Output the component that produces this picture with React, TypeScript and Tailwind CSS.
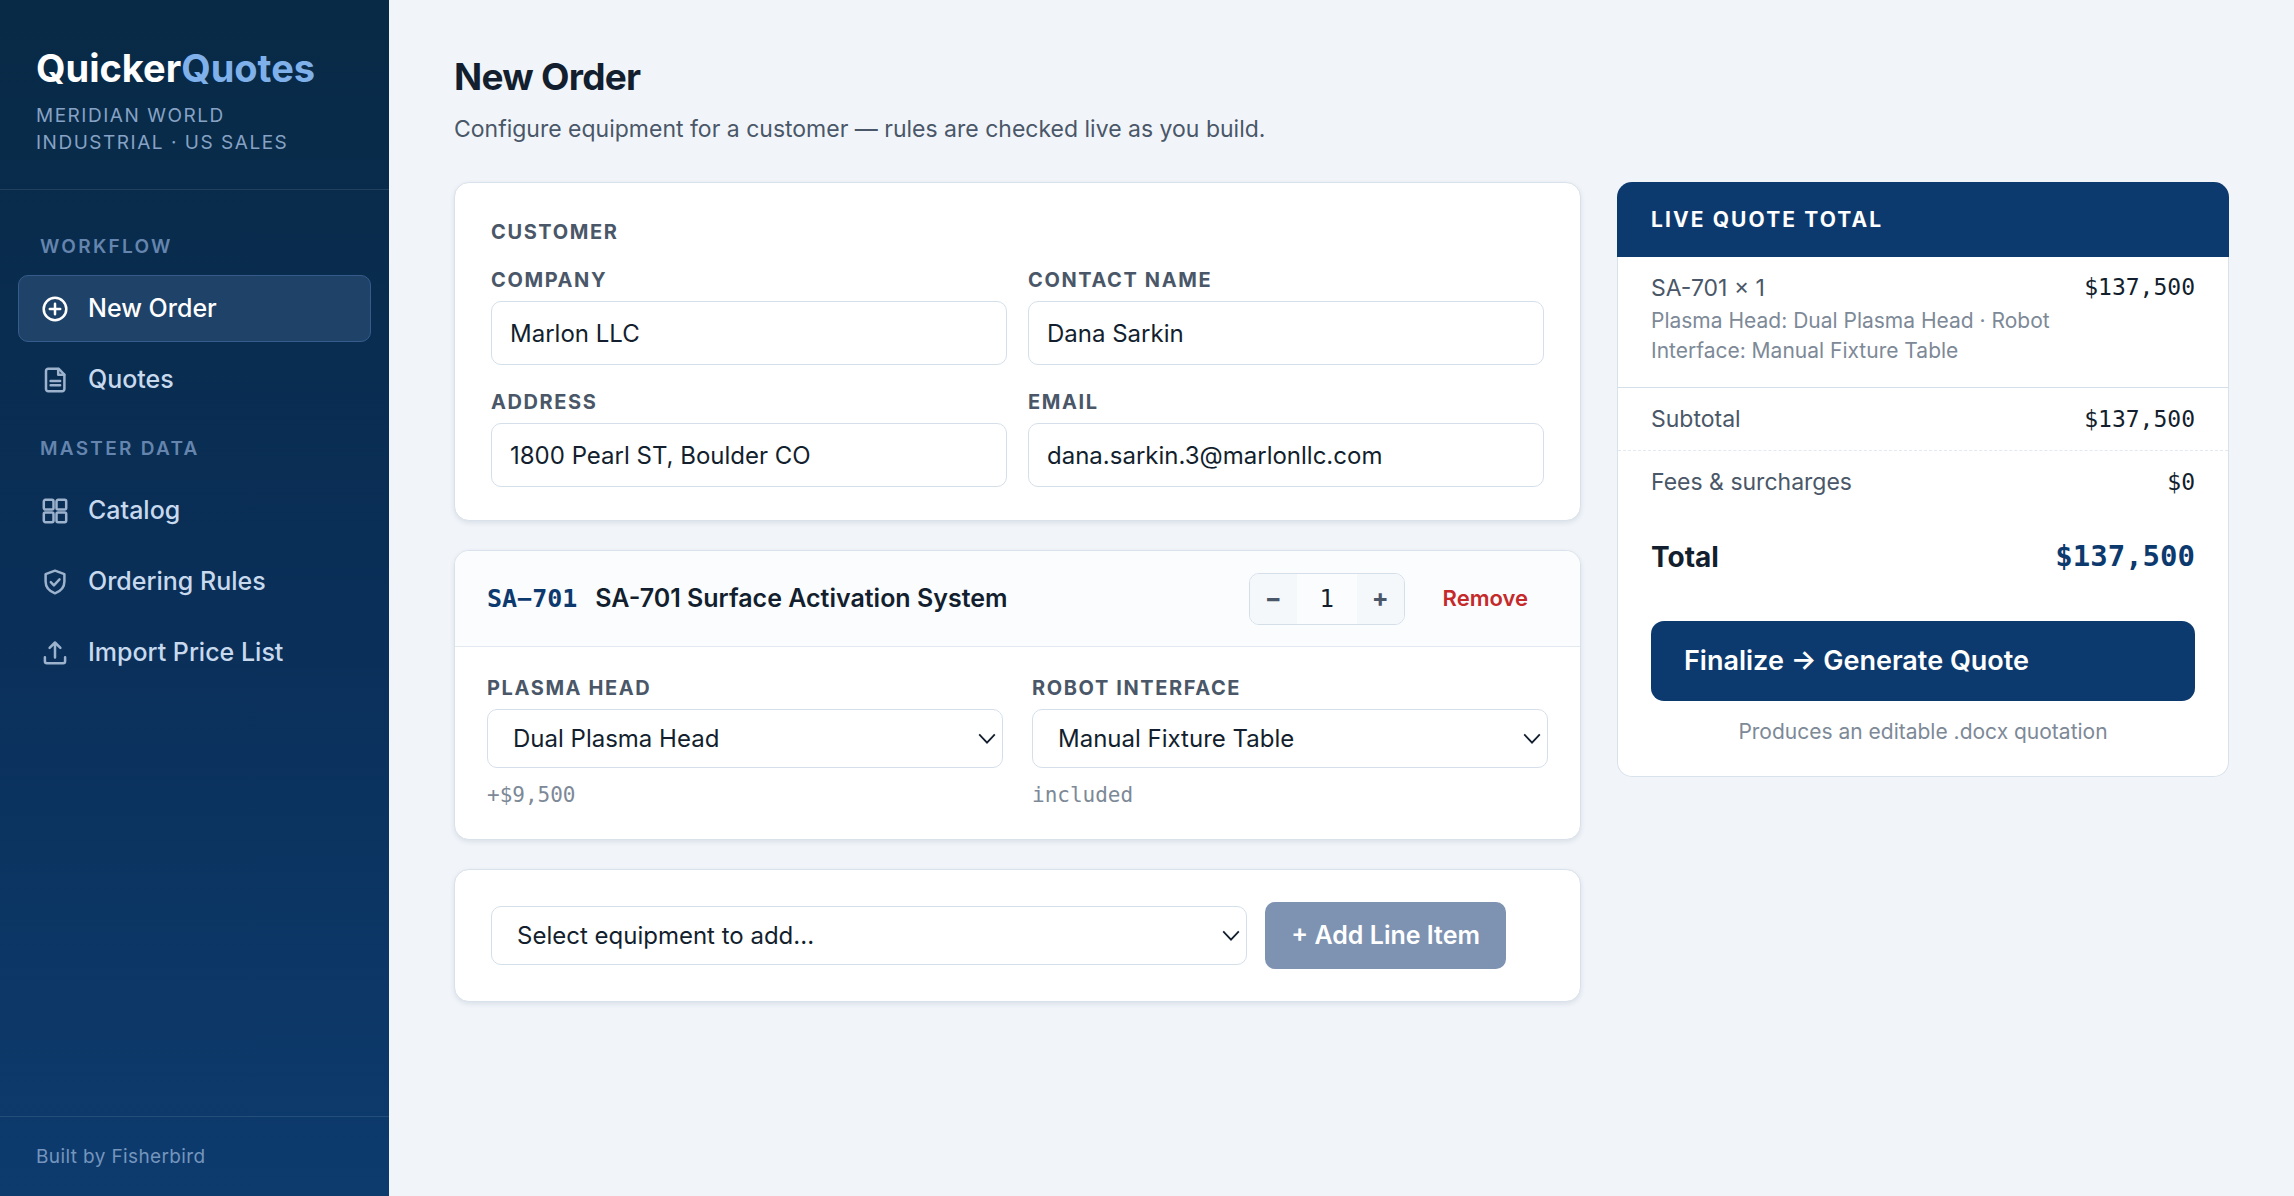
import { useState } from 'react';
import type { ReactNode } from 'react';

const LABEL = 'block text-[20px] leading-[26px] font-bold uppercase tracking-[0.08em] text-[#4a5768]';
const NAV_HEADING = 'mb-[11px] px-[22px] text-[19px] leading-[26px] font-semibold uppercase tracking-[0.12em] text-[#6585ae]';
const CARD = 'rounded-[15px] border border-[#d9e1eb] bg-white shadow-[0_2px_5px_rgba(16,42,67,0.10)]';

function Icon({ children }: { children: ReactNode }) {
  return (
    <svg
      viewBox="0 0 30 30"
      className="size-[30px] shrink-0"
      fill="none"
      stroke="currentColor"
      strokeWidth="2.5"
      strokeLinecap="round"
      strokeLinejoin="round"
      aria-hidden="true"
    >
      {children}
    </svg>
  );
}

const workflowItems = [
  {
    label: 'New Order',
    active: true,
    icon: (
      <Icon>
        <circle cx="15" cy="15" r="11.3" />
        <path d="M15 9.8v10.4M9.8 15h10.4" />
      </Icon>
    ),
  },
  {
    label: 'Quotes',
    active: false,
    icon: (
      <Icon>
        <path d="M18.5 3.7H8.2a2.2 2.2 0 0 0-2.2 2.2v18.2a2.2 2.2 0 0 0 2.2 2.2h14a2.2 2.2 0 0 0 2.2-2.2V9.6z" />
        <path d="M18.2 4v5.8h6M10.6 15.9h9.5M10.6 20.3h9.5" />
      </Icon>
    ),
  },
];

const masterDataItems = [
  {
    label: 'Catalog',
    active: false,
    icon: (
      <Icon>
        <rect x="3.8" y="3.8" width="9.7" height="9.7" rx="1.6" />
        <rect x="16.5" y="3.8" width="9.7" height="9.7" rx="1.6" />
        <rect x="3.8" y="16.5" width="9.7" height="9.7" rx="1.6" />
        <rect x="16.5" y="16.5" width="9.7" height="9.7" rx="1.6" />
      </Icon>
    ),
  },
  {
    label: 'Ordering Rules',
    active: false,
    icon: (
      <Icon>
        <path d="M15 3.7l9.4 3.5v7.3c0 5.5-3.9 9.8-9.4 11.8-5.5-2-9.4-6.3-9.4-11.8V7.2z" />
        <path d="M10.8 15.2l3.1 3.1 5.6-5.9" />
      </Icon>
    ),
  },
  {
    label: 'Import Price List',
    active: false,
    icon: (
      <Icon>
        <path d="M15 19.5v-15M9.6 9.9L15 4.5l5.4 5.4" />
        <path d="M4.9 19.2v4.1a2 2 0 0 0 2 2h16.2a2 2 0 0 0 2-2v-4.1" />
      </Icon>
    ),
  },
];

type NavItemProps = {
  label: string;
  active: boolean;
  icon: ReactNode;
};

function NavItem({ label, active, icon }: NavItemProps) {
  return (
    <a
      href="#"
      aria-current={active ? 'page' : undefined}
      className={`flex h-[67px] items-center gap-[18px] rounded-[10px] border px-[21px] text-[25px] font-medium ${
        active
          ? 'border-[#355c8c] bg-[#1e4268] text-white'
          : 'border-transparent text-[#c8d9ee] hover:bg-white/5'
      }`}
    >
      <span className={active ? 'text-white' : 'text-[#9db3cd]'}>{icon}</span>
      {label}
    </a>
  );
}

function Sidebar() {
  return (
    <aside className="flex w-[389px] shrink-0 flex-col bg-linear-to-b from-[#082a46] via-[#0a2f58] to-[#0d3b6e]">
      <div className="border-b border-white/10 px-9 pt-[46px] pb-[33px]">
        <div className="text-[38px] leading-[44px] font-bold text-white">
          Quicker<span className="text-[#7fb0ea]">Quotes</span>
        </div>
        <p className="mt-3 text-[19px] leading-[27px] uppercase tracking-[0.08em] text-[#87a2c4]">
          Meridian World
          <br />
          Industrial · US Sales
        </p>
      </div>

      <nav className="flex flex-1 flex-col gap-1 px-[18px] pt-11">
        <h2 className={NAV_HEADING}>Workflow</h2>
        {workflowItems.map((item) => (
          <NavItem key={item.label} {...item} />
        ))}
        <h2 className={`mt-[19px] ${NAV_HEADING}`}>Master Data</h2>
        {masterDataItems.map((item) => (
          <NavItem key={item.label} {...item} />
        ))}
      </nav>

      <footer className="border-t border-white/10 px-9 py-[26px] text-[19px] leading-[27px] tracking-[0.02em] text-[#7595bd]">
        Built by Fisherbird
      </footer>
    </aside>
  );
}

type TextFieldProps = {
  id: string;
  label: string;
  type?: string;
  value: string;
};

function TextField({ id, label, type = 'text', value }: TextFieldProps) {
  return (
    <div>
      <label htmlFor={id} className={LABEL}>
        {label}
      </label>
      <input
        id={id}
        type={type}
        defaultValue={value}
        className="mt-2 block h-16 w-full rounded-[10px] border border-[#d5dfea] bg-white px-[18px] text-[24px] text-[#131f2e] outline-none focus:border-[#0d3a6e]"
      />
    </div>
  );
}

type SelectBoxProps = {
  id: string;
  options: string[];
  ariaLabel?: string;
};

function SelectBox({ id, options, ariaLabel }: SelectBoxProps) {
  return (
    <div className="relative">
      <select
        id={id}
        aria-label={ariaLabel}
        className="block h-[59px] w-full appearance-none rounded-[10px] border border-[#d5dfea] bg-white pr-10 pl-[25px] text-[24px] text-[#131f2e] outline-none focus:border-[#0d3a6e]"
      >
        {options.map((option) => (
          <option key={option}>{option}</option>
        ))}
      </select>
      <svg
        viewBox="0 0 18 12"
        className="pointer-events-none absolute top-6 right-[7px] h-3 w-[18px]"
        fill="none"
        stroke="#131f2e"
        strokeWidth="1.8"
        aria-hidden="true"
      >
        <path d="M1.2 1.4L9 9.6l7.8-8.2" />
      </svg>
    </div>
  );
}

function CustomerCard() {
  return (
    <section className={`${CARD} px-9 pt-9 pb-[33px]`}>
      <h2 className={LABEL}>Customer</h2>
      <div className="mt-[22px] grid grid-cols-2 gap-x-[21px] gap-y-6">
        <TextField id="company" label="Company" value="Marlon LLC" />
        <TextField id="contact" label="Contact Name" value="Dana Sarkin" />
        <TextField id="address" label="Address" value="1800 Pearl ST, Boulder CO" />
        <TextField id="email" label="Email" type="email" value="dana.sarkin.3@marlonllc.com" />
      </div>
    </section>
  );
}

type OptionFieldProps = {
  id: string;
  label: string;
  options: string[];
  note: string;
};

function OptionField({ id, label, options, note }: OptionFieldProps) {
  return (
    <div>
      <label htmlFor={id} className={`mb-2 ${LABEL}`}>
        {label}
      </label>
      <SelectBox id={id} options={options} />
      <p className="mt-3 font-['DejaVu_Sans_Mono',monospace] text-[21px] leading-[30px] text-[#7d8997]">{note}</p>
    </div>
  );
}

function LineItemCard() {
  const [qty, setQty] = useState(1);

  return (
    <section className={`${CARD} overflow-hidden`}>
      <header className="flex h-24 items-center border-b border-[#e2e9f1] bg-[#fafcfe] px-8">
        <span className="font-['DejaVu_Sans_Mono',monospace] text-[25px] font-bold text-[#0d3a6e]">SA−701</span>
        <h2 className="ml-[18px] flex-1 text-[25px] font-semibold text-[#131f2e]">SA-701 Surface Activation System</h2>

        {/* Quantity */}
        <div className="flex h-[52px] overflow-hidden rounded-[10px] border border-[#d5dfea]">
          <button
            type="button"
            aria-label="Decrease quantity"
            onClick={() => setQty(Math.max(1, qty - 1))}
            className="w-[47px] bg-[#f4f8fb] text-[25px] font-bold text-[#4a5768]"
          >
            −
          </button>
          <input
            type="text"
            aria-label="Quantity"
            value={qty}
            readOnly
            className="w-[60px] bg-transparent text-center font-['DejaVu_Sans_Mono',monospace] text-[24px] text-[#131f2e] outline-none"
          />
          <button
            type="button"
            aria-label="Increase quantity"
            onClick={() => setQty(qty + 1)}
            className="w-[47px] bg-[#f4f8fb] text-[25px] font-bold text-[#4a5768]"
          >
            +
          </button>
        </div>
        <button type="button" className="ml-[18px] px-5 text-[22px] font-semibold text-[#c52a2a]">
          Remove
        </button>
      </header>

      <div className="grid grid-cols-2 gap-x-[29px] px-8 pt-7 pb-[29px]">
        <OptionField
          id="plasma-head"
          label="Plasma Head"
          options={['Dual Plasma Head', 'Single Plasma Head']}
          note="+$9,500"
        />
        <OptionField
          id="robot-interface"
          label="Robot Interface"
          options={['Manual Fixture Table', 'Robot Arm']}
          note="included"
        />
      </div>
    </section>
  );
}

function AddItemCard() {
  return (
    <section className={`${CARD} flex items-center gap-[18px] py-8 pr-[74px] pl-9`}>
      <div className="flex-1">
        <SelectBox id="equipment" ariaLabel="Equipment" options={['Select equipment to add...', 'SA-701']} />
      </div>
      <button
        type="button"
        className="h-[67px] rounded-[10px] bg-[#7e92b1] px-[26px] text-[25px] font-semibold whitespace-nowrap text-white"
      >
        + Add Line Item
      </button>
    </section>
  );
}

function QuoteSummary() {
  const amount = "font-['DejaVu_Sans_Mono',monospace] text-[23px] text-[#131f2e]";

  return (
    <aside>
      <h2 className="rounded-t-[15px] bg-[#0d3a6e] px-[34px] py-6 text-[21px] leading-[27px] font-bold uppercase tracking-[0.1em] text-white">
        Live Quote Total
      </h2>

      <div className="rounded-b-[15px] border border-t-0 border-[#d9e1eb] bg-white">
        <div className="flex items-start justify-between border-b border-[#d5dfea] px-[33px] pt-[14px] pb-[21px]">
          <div className="w-[410px]">
            <div className="text-[23px] leading-[35px] text-[#4a5768]">SA-701 × 1</div>
            <p className="text-[21px] leading-[30px] text-[#7d8997]">
              Plasma Head: Dual Plasma Head · Robot Interface: Manual Fixture Table
            </p>
          </div>
          <span className={`${amount} leading-8`}>$137,500</span>
        </div>
        <div className="flex h-[63px] items-center justify-between border-b border-dashed border-[#e2e9f1] px-[33px]">
          <span className="text-[23px] text-[#4a5768]">Subtotal</span>
          <span className={amount}>$137,500</span>
        </div>
        <div className="flex h-[63px] items-center justify-between px-[33px]">
          <span className="text-[23px] text-[#4a5768]">Fees &amp; surcharges</span>
          <span className={amount}>$0</span>
        </div>
        <div className="flex h-[86px] items-center justify-between px-[33px]">
          <span className="text-[28px] font-bold text-[#131f2e]">Total</span>
          <span className="font-['DejaVu_Sans_Mono',monospace] text-[29px] font-bold text-[#0d3a6e]">$137,500</span>
        </div>

        <div className="px-[33px] pt-[21px] pb-[29px]">
          <button
            type="button"
            className="block h-20 w-full rounded-[13px] bg-[#0d3a6e] px-[33px] text-left text-[27px] font-semibold text-white"
          >
            Finalize → Generate Quote
          </button>
          <p className="mt-4 text-center text-[21px] leading-[30px] text-[#7d8997]">
            Produces an editable .docx quotation
          </p>
        </div>
      </div>
    </aside>
  );
}

export default function App() {
  return (
    <div className="flex min-h-screen bg-[#f1f5fa] font-['Inter',sans-serif]">
      <Sidebar />
      <main className="min-w-0 flex-1 px-[65px] pt-[54px] pb-12">
        <h1 className="text-[37px] leading-[46px] font-bold tracking-[-0.02em] text-[#131f2e]">New Order</h1>
        <p className="mt-3 text-[23px] leading-[34px] text-[#4a5768]">
          Configure equipment for a customer — rules are checked live as you build.
        </p>

        <div className="mt-9 grid grid-cols-[minmax(0,1fr)_612px] items-start gap-9">
          <div className="flex flex-col gap-[29px]">
            <CustomerCard />
            <LineItemCard />
            <AddItemCard />
          </div>
          <QuoteSummary />
        </div>
      </main>
    </div>
  );
}
